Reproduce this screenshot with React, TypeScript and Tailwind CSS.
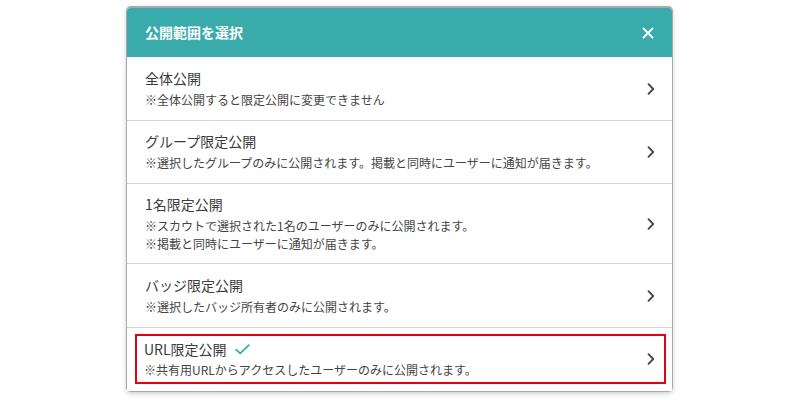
import React from "react";

const font = { fontFamily: '"Noto Sans CJK JP", "Noto Sans", sans-serif' };

function Chevron() {
  return (
    <svg width="8" height="12" viewBox="0 0 8 12" className="shrink-0">
      <path d="M1.5 1.2 L6.2 6 L1.5 10.8" fill="none" stroke="#444" strokeWidth="1.8" strokeLinecap="round" strokeLinejoin="round" />
    </svg>
  );
}

function Check() {
  return (
    <svg width="15" height="11" viewBox="0 0 15 11" className="shrink-0">
      <path d="M1.2 5.6 L5.2 9.4 L13.8 1.2" fill="none" stroke="#3aabab" strokeWidth="1.8" strokeLinecap="round" strokeLinejoin="round" />
    </svg>
  );
}

type Item = { title: string; subs: string[]; pad: string };

const items: Item[] = [
  { title: "全体公開", subs: ["※全体公開すると限定公開に変更できません"], pad: "pt-[11px] pb-[11px]" },
  {
    title: "グループ限定公開",
    subs: ["※選択したグループのみに公開されます。掲載と同時にユーザーに通知が届きます。"],
    pad: "pt-[10px] pb-[11px]",
  },
  {
    title: "1名限定公開",
    subs: ["※スカウトで選択された1名のユーザーのみに公開されます。", "※掲載と同時にユーザーに通知が届きます。"],
    pad: "pt-[10px] pb-[10px]",
  },
  { title: "バッジ限定公開", subs: ["※選択したバッジ所有者のみに公開されます。"], pad: "pt-[11px] pb-[11px]" },
];

function Row({ item }: { item: Item }) {
  return (
    <div className={"flex items-center justify-between border-b border-[#d6d6d6] pl-[18px] pr-[17px] " + item.pad}>
      <div className="flex flex-col">
        <div className="text-[14px] leading-[20px] text-[#3c3c3c]">{item.title}</div>
        <div className="mt-[3px] text-[12px] leading-[18px] text-[#444]">
          {item.subs.map((s, i) => (
            <div key={i}>{s}</div>
          ))}
        </div>
      </div>
      <Chevron />
    </div>
  );
}

export default function App() {
  return (
    <div className="h-[400px] w-[800px] bg-white" style={font}>
      <div className="ml-[126px] pt-[6px]">
        <div className="w-[547px] rounded-[5px] bg-[#a9a9a9] px-px pt-[2px] pb-px shadow-[0_2px_5px_rgba(0,0,0,0.18)]">
          <div className="overflow-hidden rounded-t-[4px] bg-white">
            <div className="flex h-[49px] items-center justify-between bg-[#3aabab] pl-[18px] pr-[18px]">
              <div className="text-[14px] font-bold text-white">公開範囲を選択</div>
              <svg width="12" height="12" viewBox="0 0 12 12">
                <path d="M1.5 1.5 L10.5 10.5 M10.5 1.5 L1.5 10.5" stroke="#fff" strokeWidth="1.8" strokeLinecap="round" />
              </svg>
            </div>
            {items.map((it, i) => (
              <Row key={i} item={it} />
            ))}
            <div className="px-[8px] pt-[6px] pb-[7px] pr-[6px]">
              <div className="flex items-center justify-between border-2 border-[#e60012] pl-[7px] pr-[9px] pt-[3px] pb-[3px]">
                <div className="flex flex-col">
                  <div className="flex items-center gap-[8px] text-[14px] leading-[20px] text-[#3c3c3c]">
                    <span>URL限定公開</span>
                    <Check />
                  </div>
                  <div className="mt-[2px] text-[12px] leading-[18px] text-[#444]">
                    ※共有用URLからアクセスしたユーザーのみに公開されます。
                  </div>
                </div>
                <Chevron />
              </div>
            </div>
          </div>
        </div>
      </div>
    </div>
  );
}
